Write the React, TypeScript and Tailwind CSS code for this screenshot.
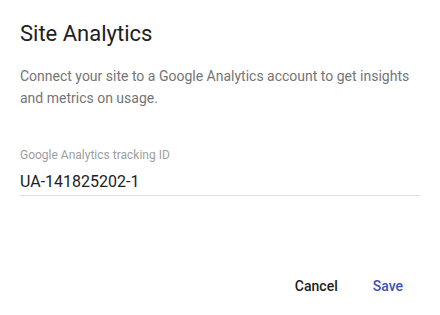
import React from 'react';

export default function App() {
    return (
        <div className="w-[440px] h-[315px] bg-white flex flex-col font-['Roboto',sans-serif]">
            <div className="px-5 pt-[20px]">
                <h2 className="text-[22px] leading-[28px] text-[#212121]">Site Analytics</h2>
                <p className="mt-[17px] text-[14px] leading-[22px] text-[#757575]">
                    Connect your site to a Google Analytics account to get insights and metrics on usage.
                </p>
                <div className="mt-[38px]">
                    <label className="block text-[12px] leading-[16px] text-[#9e9e9e]">Google Analytics tracking ID</label>
                    <div className="mt-[8px] pb-[2px] border-b border-[#e0e0e0] text-[16px] leading-[22px] text-[#212121]">UA-141825202-1</div>
                </div>
            </div>
            <div className="mt-auto flex justify-end gap-[11px] pr-[25px] pb-[11px]">
                <button className="px-3 h-9 text-[14px] font-medium text-[#212121]">Cancel</button>
                <button className="px-3 h-9 text-[14px] font-medium text-[#3f51b5]">Save</button>
            </div>
        </div>
    );
}
